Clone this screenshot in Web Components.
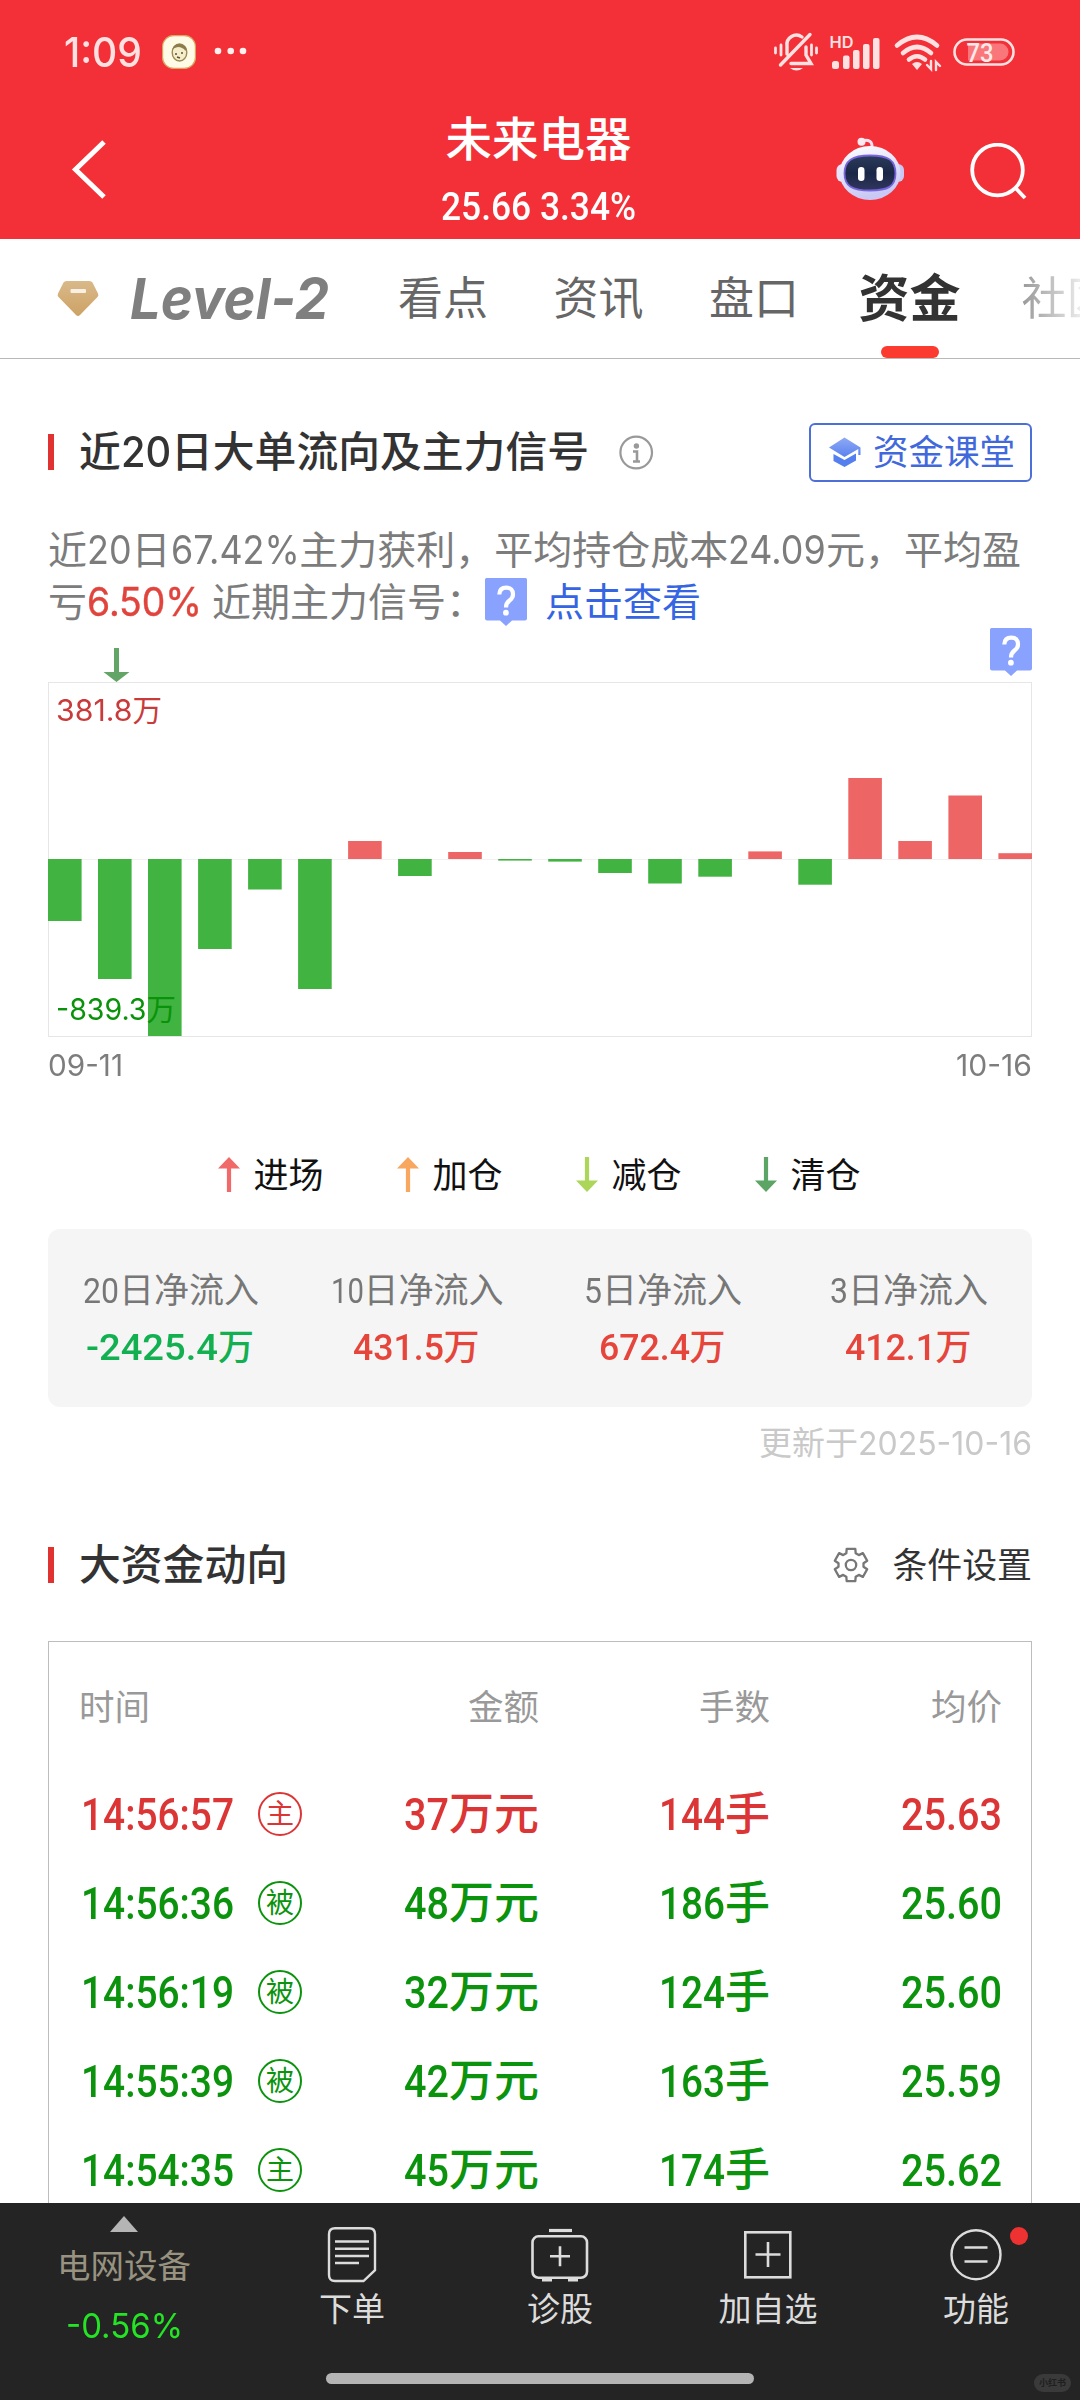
<!DOCTYPE html>
<html lang="zh-CN">
<head>
<meta charset="utf-8">
<title>未来电器</title>
<style>
html,body{margin:0;padding:0;background:#fff}
body{width:1080px;height:2400px;overflow:hidden;font-family:"Noto Sans CJK SC",sans-serif}
</style>
</head>
<body>
<stock-app></stock-app>
<script>
const def=(name,html,after)=>customElements.define(name,class extends HTMLElement{
  connectedCallback(){
    if(this.shadowRoot)return;
    this.attachShadow({mode:'open'}).innerHTML=typeof html==='function'?html(this):html;
    if(after)after(this);
  }
});

/* Single-line text whose latin runs are scaled so the line is exactly `w` px wide. */
def('fit-text',`<style>
:host{display:block;flex:none;line-height:1;height:1em;padding-bottom:.112em;white-space:pre}
i{font-style:inherit;display:inline-block;line-height:0;transform-origin:0 50%;font-family:var(--latin,Inter);-webkit-text-stroke:var(--stroke,0)}
</style><span></span>`,el=>{
  const box=el.shadowRoot.querySelector('span');
  const text=el.textContent;
  for(const part of text.split(/([\x20-\x7e]+)/)){
    if(!part)continue;
    if(/^[\x20-\x7e]/.test(part)){const i=document.createElement('i');i.textContent=part;box.append(i)}
    else box.append(part);
  }
  const w=parseFloat(el.getAttribute('w'));
  const runs=[...box.querySelectorAll('i')];
  if(!w||!runs.length)return;
  const widths=runs.map(r=>r.getBoundingClientRect().width);
  const latin=widths.reduce((a,b)=>a+b,0);
  const k=(w-(box.getBoundingClientRect().width-latin))/latin;
  runs.forEach((r,n)=>{r.style.width=widths[n]*k+'px';r.style.transform=`scaleX(${k})`});
});

def('status-bar',`<style>
:host{display:flex;height:104px;align-items:center;padding:0 65px 0 64px;color:#ffe1e2}
fit-text{font-size:41px;font-weight:500}
svg{flex:none;display:block;overflow:visible}
.app{margin-left:20px}.dots{margin-left:18px}.sp{flex:1}
.bell{margin-right:12px}.sig{margin-right:12px}.wifi{margin-right:13px}
</style>
<fit-text w="78">1:09</fit-text>
<svg class="app" width="34" height="34" viewBox="0 0 34 34"><rect x=".6" y=".6" width="32.8" height="32.8" rx="11" fill="#fffbe6" stroke="#d8a860" stroke-width="1.2"/><ellipse cx="17.500" cy="17.500" rx="7.300" ry="8.500" fill="#f6edcb" stroke="#9b8b58" stroke-width="1.400"/><path d="M10.500 14c2-6 10-7 14-1l-1 3c-2-3-5-4-7-4s-4 1-6 2z" fill="#8d7d4c"/><path d="M14 18v2M20 17v2M15 22l3 1" stroke="#5d5138" stroke-width="1.500"/></svg>
<svg class="dots" width="34" height="10" viewBox="0 0 34 10" fill="#fff0f0"><circle cx="4" cy="4" r="3.300"/><circle cx="16.700" cy="4" r="3.300"/><circle cx="29" cy="4" r="3.300"/></svg>
<div class="sp"></div>
<svg class="bell" width="44" height="40" viewBox="0 0 44 40" fill="none" stroke="#ffe1e2" stroke-width="3.400" stroke-linecap="round"><path d="M13 22V14a9.500 9.500 0 0 1 15-9M32 15v8l5 8.500H17M6.500 33L36 2.500"/><path d="M1.500 16v5M7 13v10M37.500 13v10M42.500 16v5" stroke-width="2.800"/><path d="M16 36h13q-6.500 5-13 0z" fill="#ffe1e2" stroke="none"/></svg>
<svg class="sig" width="52" height="36" viewBox="0 0 52 36" fill="#ffe1e2"><text x="-0.500" y="13.500" font-size="16" font-family="Inter" font-weight="600" textLength="24" lengthAdjust="spacingAndGlyphs">HD</text><rect x="2" y="27" width="7" height="8" rx="2.500"/><rect x="13" y="21.500" width="6.500" height="13.500" rx="2"/><rect x="23" y="16" width="6.500" height="19" rx="2"/><rect x="33" y="10" width="6.500" height="25" rx="2"/><rect x="43" y="4" width="6.500" height="31" rx="2"/></svg>
<svg class="wifi" width="46" height="38" viewBox="0 0 46 38" fill="none" stroke="#ffe1e2" stroke-width="4.600" stroke-linecap="round"><path d="M3 12.500q20-17 40 0M9 20q14-12 28 0M15 26.500q8-6.500 16 0"/><path d="M18 31q5-4 10 0l-5 6z" fill="#ffe1e2" stroke="none"/><path d="M37 28v8l-4-4M42 37v-8l4 4" stroke-width="2.400"/></svg>
<svg width="62" height="28" viewBox="0 0 62 28"><rect x="1.500" y="1.500" width="59" height="25" rx="12.500" fill="none" stroke="#ffe1e2" stroke-width="2.600"/><path d="M15 5.500H47a8.500 8.500 0 0 1 8.500 8.500 8.500 8.500 0 0 1-8.500 8.500H15z" fill="#f9777a"/><text x="13.500" y="23.500" font-size="25" font-family="Roboto" font-weight="500" fill="#ffe9e9" textLength="27" lengthAdjust="spacingAndGlyphs">73</text></svg>`);

def('app-header',`<style>
:host{display:block;height:239px;background:#f33038;color:#fff}
.nav{height:135px;display:flex;padding:0 50px 0 68px;align-items:flex-start}
svg{display:block;flex:none}
.back{margin-top:34px}
.mid{flex:1;display:flex;flex-direction:column;align-items:center;padding-left:133px;padding-top:9px}
.name{font-size:46.500px;font-weight:500}
.q{font-size:39px;font-weight:500;margin-top:19px;--latin:Roboto}
.bot{margin-top:32px}.s{margin:39px 0 0 54px}
</style>
<status-bar></status-bar>
<div class="nav">
<svg class="back" width="40" height="64" viewBox="0 0 40 64"><path d="M36 4L7.500 31.500L36 59" fill="none" stroke="#fff" stroke-width="5"/></svg>
<div class="mid"><fit-text class="name">未来电器</fit-text><fit-text class="q" w="195">25.66 3.34%</fit-text></div>
<svg class="bot" width="70" height="66" viewBox="0 0 70 66"><defs><linearGradient id="h" x1="0" y1="0" x2=".3" y2="1"><stop offset="0" stop-color="#fff"/><stop offset="1" stop-color="#c9c8f5"/></linearGradient><linearGradient id="f" x1="0" y1="0" x2="0" y2="1"><stop offset="0" stop-color="#2c3b5c"/><stop offset=".5" stop-color="#1b2746"/><stop offset="1" stop-color="#30365e"/></linearGradient></defs><path d="M25 5q12-3 11 7" fill="none" stroke="#f5dff0" stroke-width="3"/><circle cx="25.500" cy="5.800" r="4" fill="#fbe9f2"/><rect x="0.500" y="28" width="12" height="18" rx="6" fill="#e5e4fc"/><rect x="56" y="28" width="12" height="18" rx="6" fill="#c9c8f4"/><ellipse cx="34" cy="37" rx="30.500" ry="27" fill="url(#h)"/><path d="M34 19.500c19 0 25.500 5 25.500 18S52 54.500 34 54.500 8.500 50 8.500 37.500 16 19.500 34 19.500z" fill="url(#f)" stroke="#7865dc" stroke-width="1.800"/><rect x="22" y="31" width="6.500" height="14" rx="3.200" fill="#fff"/><rect x="40.500" y="31" width="6.500" height="14" rx="3.200" fill="#fff"/></svg>
<svg class="s" width="70" height="60" viewBox="0 0 70 60" fill="none" stroke="#fff" stroke-width="3.800"><circle cx="37.500" cy="27" r="25.300"/><path d="M56 45.500l9 9.500"/></svg>
</div>`);

def('tab-bar',`<style>
:host{display:flex;border-bottom:1px solid #b8b8b8;box-sizing:border-box;height:120px;align-items:center;color:#666;font-size:45px;padding-left:57px;overflow:hidden}
svg{flex:none;display:block}
.l{font-size:57px;color:#7f7f7f;font-weight:700;font-style:italic;margin:-2px 69px 0 31px}
.t{width:155.500px;flex:none}
.on{flex:none;margin-left:-12px;color:#333;font-size:51px;font-weight:700;height:119px;display:flex;flex-direction:column;align-items:center;width:114px}
.on fit-text{margin-top:31px}
.on b{display:block;width:58px;height:12px;border-radius:6px;background:#fb3a30;margin-top:19px}
.last{margin-left:55px;color:#999;-webkit-mask-image:linear-gradient(90deg,#000 0,rgba(0,0,0,.4) 45px,rgba(0,0,0,.2) 58px);mask-image:linear-gradient(90deg,#000 0,rgba(0,0,0,.4) 45px,rgba(0,0,0,.2) 58px)}
</style>
<svg width="42" height="36" viewBox="0 0 42 36"><defs><linearGradient id="g" x2="0" y2="1"><stop stop-color="#d9b98a"/><stop offset="1" stop-color="#cda264"/></linearGradient></defs><path d="M9.500 0h23q2 0 3 1.500l5.500 11q1 2-.5 3.500L23 34q-2 2-4 0L1.500 16q-1.500-1.500-.5-3.500L6.500 1.500Q7.500 0 9.500 0z" fill="url(#g)"/><rect x="13.500" y="8" width="15.500" height="4" rx="1" fill="#f8f0e4"/></svg>
<fit-text class="l" w="199">Level-2</fit-text>
<fit-text class="t">看点</fit-text><fit-text class="t">资讯</fit-text><fit-text class="t">盘口</fit-text>
<div class="on"><fit-text>资金</fit-text><b></b></div>
<fit-text class="last">社区</fit-text>`);

def('section-title',el=>`<style>
:host{display:flex;align-items:center;height:58px;color:#333}
i{width:6px;height:36px;background:#e13232;margin-right:25px}
fit-text{font-size:41.800px;font-weight:500}
.sp{flex:1}
</style><i></i><fit-text w="${el.getAttribute('w')||''}">${el.getAttribute('label')}</fit-text><slot name="after"></slot><span class="sp"></span><slot></slot>`);

def('info-icon',`<style>:host{display:block;margin-left:30px}svg{display:block}</style>
<svg width="36" height="36" viewBox="0 0 36 36"><circle cx="17.200" cy="18.500" r="15.800" fill="none" stroke="#999" stroke-width="2.200"/><circle cx="17.400" cy="12" r="2.700" fill="#999"/><path d="M14 17.500h4V27M14 27.500h7" fill="none" stroke="#999" stroke-width="2.600"/></svg>`);

def('lesson-button',`<style>
:host{display:flex;box-sizing:border-box;width:223px;height:59px;border:2px solid #4d70d8;border-radius:6px;align-items:center;padding-left:17px;color:#4269dc;font-size:35.500px}
svg{display:block;margin-right:11px}
</style>
<svg width="34" height="32" viewBox="0 0 34 32"><defs><linearGradient id="c" x2="0" y2="1"><stop stop-color="#8fa9f5"/><stop offset="1" stop-color="#5a82ee"/></linearGradient></defs><path d="M1 11.500L16.500 1.500L32.500 11.500V19h-2.200V13L16.500 21z" fill="url(#c)"/><path d="M5.500 18l11 6 11.500-6.500v7L16.500 31 5.500 25z" fill="#557fee"/></svg>
<fit-text>资金课堂</fit-text>`);

def('q-badge',`<style>:host{display:block;flex:none}svg{display:block}</style>
<svg width="42" height="48" viewBox="0 0 42 48"><path d="M1.500 0h39Q42 0 42 1.500v39Q42 42.500 40 42.500H27L21 48l-6-5.500H2Q0 42.500 0 40.500v-39Q0 0 1.500 0z" fill="#89a2fd"/><path d="M14.300 16.500Q14.500 9.700 21.300 9.700T28 16.500Q28 19.800 24.500 22.500T21 29.500" fill="none" stroke="#fff" stroke-width="4.200"/><circle cx="20.900" cy="34.700" r="2.900" fill="#fff"/></svg>`);

def('flow-brief',`<style>
:host{display:block;margin-top:43px;font-size:39px;color:#7c7c7c}
.row{display:flex;height:52px;align-items:center}
.r{color:#e0443c;--stroke:.4px}.b{color:#3565e2;margin-left:18px}
</style>
<div class="row"><fit-text w="973">近20日67.42%主力获利，平均持仓成本24.09元，平均盈</fit-text></div>
<div class="row"><fit-text>亏</fit-text><fit-text class="r" w="115">6.50%</fit-text><fit-text w="283"> 近期主力信号：</fit-text><q-badge></q-badge><fit-text class="b">点击查看</fit-text></div>`);

const bars=[-62,-120,-177,-90,-30.5,-130,18,-17,7,-1.6,-2.6,-14,-24.5,-17.7,7.6,-25.7,81,18,63.5,5.8];
def('flow-chart',()=>`<style>
:host{display:block;color:#7d7d7d}
.marks{height:54px;display:flex;justify-content:space-between;padding-left:55px}
.marks svg{margin-top:20px}
.plot{height:355px;position:relative}
.plot>svg{display:block}
.lab{position:absolute;left:8px;font-size:29.500px;z-index:1}
.hi{top:12px;color:#c93a3a}.lo{bottom:11px;color:#0a930a}
.dates{height:56px;display:flex;align-items:center;justify-content:space-between;font-size:30px}
</style>
<div class="marks"><svg width="27" height="34" viewBox="0 0 27 34" fill="#62a566"><path d="M11 0h5v24h10.500L13.500 34 .5 24H11z"/></svg><q-badge></q-badge></div>
<div class="plot"><svg width="984" height="355"><rect x=".5" y=".5" width="983" height="354" fill="none" stroke="#e6e6e6"/><path d="M0 177.500h984" stroke="#f1f1f1"/>${bars.map((v,i)=>`<rect x="${(i*50.02).toFixed(1)}" y="${v>0?177-v:177}" width="33.600" height="${Math.abs(v)}" fill="${v>0?'#ee6565':'#41b341'}"/>`).join('')}</svg>
<fit-text class="lab hi" w="106">381.8万</fit-text><fit-text class="lab lo" w="120">-839.3万</fit-text></div>
<div class="dates"><fit-text w="75">09-11</fit-text><fit-text w="76">10-16</fit-text></div>`);

def('signal-legend',()=>{
  const item=(t,c,up)=>`<div><svg width="22" height="35" viewBox="0 0 22 35" fill="${c}"><path ${up?'':'transform="rotate(180 11 17.5)"'} d="M11 0l11 11.500h-8.900V35H8.900V11.500H0z"/></svg><fit-text>${t}</fit-text></div>`;
  return `<style>
:host{display:flex;height:40px;margin-top:61px;padding-left:170px;font-size:35px;color:#111}
div{display:flex;align-items:center;width:179px}
svg{display:block;margin-right:13.500px}
</style>${item('进场','#f16a6a',1)}${item('加仓','#f9a65e',1)}${item('减仓','#acd65a')}${item('清仓','#5ba565')}`;
});

def('net-summary',()=>{
  const c=(l,lw,v,vw,g)=>`<div><fit-text class="l" w="${lw}">${l}</fit-text><fit-text class="v ${g||''}" w="${vw}">${v}</fit-text></div>`;
  return `<style>
:host{display:grid;grid-template-columns:repeat(4,1fr);height:178px;margin-top:35px;background:#f5f5f5;border-radius:12px;--latin:Roboto}
div{display:flex;flex-direction:column;align-items:center;padding-top:41px}
.l{font-size:35px;color:#777}.v{font-size:36px;margin-top:17px;margin-right:2px;color:#e6453c;font-weight:500}
.g{color:#12b050}
</style>${c('20日净流入',176,'-2425.4万',168,'g')}${c('10日净流入',173,'431.5万',127)}${c('5日净流入',158,'672.4万',127)}${c('3日净流入',158,'412.1万',127)}`;
});

def('update-note',`<style>:host{display:flex;justify-content:flex-end;align-items:center;height:40px;margin-top:16px;font-size:33px;color:#c9c9c9}</style><fit-text w="273">更新于2025-10-16</fit-text>`);

def('filter-link',()=>{
  let d='';
  for(let n=0;n<6;n++){
    const a=n*60-90,p=(r,t)=>{const q=(a+t)*Math.PI/180;return (18+r*Math.cos(q)).toFixed(1)+' '+(18+r*Math.sin(q)).toFixed(1)};
    d+=(n?'L':'M')+p(12.6,-22)+'L'+p(16.8,-15)+'L'+p(16.8,15)+'L'+p(12.6,22);
  }
  return `<style>:host{display:flex;align-items:center;font-size:34.900px;color:#333}svg{display:block;margin-right:23px}</style>
<svg width="36" height="36" viewBox="0 0 36 36" fill="none" stroke="#777" stroke-width="2.300" stroke-linejoin="round"><path d="${d}z"/><circle cx="18" cy="18" r="5.200"/></svg><fit-text>条件设置</fit-text>`;
});

def('trade-row',el=>{
  const [t,k,a,h,p,c]=el.getAttribute('data').split('|');
  return `<style>
:host{display:flex;height:89px;align-items:center;padding:0 29px 0 32px;color:${c==='r'?'#dc3535':'#0b930d'};font-size:45px;font-weight:500;--latin:Roboto}
b{box-sizing:border-box;width:44px;height:44px;border:2px solid currentColor;border-radius:50%;display:flex;align-items:center;justify-content:center;font-size:28px;font-weight:400;margin-left:24px}
div{display:flex;justify-content:flex-end}
.a{flex:1}.h{width:231px}.p{width:232px}
</style><fit-text w="153">${t}</fit-text><b><fit-text>${k}</fit-text></b><div class="a"><fit-text w="135">${a}</fit-text></div><div class="h"><fit-text w="111">${h}</fit-text></div><div class="p"><fit-text w="101">${p}</fit-text></div>`;
});

def('trade-table',`<style>
:host{display:block;box-sizing:border-box;height:620px;margin-top:47px;border:1px solid #bdbdbd}
.head{height:127px;box-sizing:border-box;padding:3px 29px 0 30px;display:flex;align-items:center;color:#999;font-size:35.500px}
.head fit-text+fit-text{text-align:right}
.h{width:231px}.a{flex:1}.p{width:232px}
</style><div class="head"><fit-text>时间</fit-text><fit-text class="a">金额</fit-text><fit-text class="h">手数</fit-text><fit-text class="p">均价</fit-text></div>
<trade-row data="14:56:57|主|37万元|144手|25.63|r"></trade-row>
<trade-row data="14:56:36|被|48万元|186手|25.60|g"></trade-row>
<trade-row data="14:56:19|被|32万元|124手|25.60|g"></trade-row>
<trade-row data="14:55:39|被|42万元|163手|25.59|g"></trade-row>
<trade-row data="14:54:35|主|45万元|174手|25.62|g"></trade-row>`);

def('bottom-bar',`<style>
:host{display:block;flex:none;height:197px;background:#242424;color:#dcdcdc;font-size:33px}
.row{display:flex;height:170px}
.ix{width:248px;display:flex;flex-direction:column;align-items:center;padding-top:13px;box-sizing:border-box}
.ix svg{display:block}
.n{color:#989280;margin-top:15px;font-size:33.500px}.v{color:#25e425;margin-top:22px;font-size:34.500px}
.it{flex:1;display:flex;flex-direction:column;align-items:center;position:relative}
.it svg{display:block;margin-top:21px;fill:none;stroke:#dcdcdc}
.it fit-text{margin-top:5px}
.dot{position:absolute;left:138px;top:24px;width:18px;height:18px;border-radius:50%;background:#ee3131}
.home{width:428px;height:11px;border-radius:6px;background:#b4b4b4;margin-left:326px}
.wm{position:absolute;left:1034px;top:2374px;width:37px;height:18px;border-radius:9px;background:#3a3a3a;color:#1f1f1f;font-size:9px;font-weight:700;display:flex;align-items:center;justify-content:center}
</style>
<div class="row">
<div class="ix"><svg width="28" height="16" viewBox="0 0 28 16"><path d="M14 0l14 16H0z" fill="#b5b5b5"/></svg><fit-text class="n">电网设备</fit-text><fit-text class="v" w="117">-0.56%</fit-text></div>
<div class="it"><svg width="50" height="62" viewBox="0 0 50 62" stroke-width="2.400"><path d="M8 4.200h34q6 0 6 6v36L36.500 57H8q-6 0-6-6V10.200q0-6 6-6z"/><path d="M8 17.500h34M8 24.800h34M8 32h34M8 39h24"/></svg><fit-text>下单</fit-text></div>
<div class="it"><svg width="60" height="62" viewBox="0 0 60 62" stroke-width="2.600"><path d="M19 6.500h23" stroke-width="3.200"/><rect x="2.500" y="12.300" width="54.500" height="41.500" rx="6"/><path d="M12 55.500h10M38 55.500h10" stroke-width="4"/><path d="M20 32.300h20M30 22.300v20"/></svg><fit-text>诊股</fit-text></div>
<div class="it"><svg width="50" height="62" viewBox="0 0 50 62" stroke-width="2.600"><rect x="2.300" y="8.300" width="45" height="45"/><path d="M12.500 30.500h25M25 18v25"/></svg><fit-text>加自选</fit-text></div>
<div class="it"><svg width="54" height="62" viewBox="0 0 54 62" stroke-width="2.400"><circle cx="27" cy="30.700" r="24.500"/><path d="M15.500 23.500h23M15.500 37.500h23"/></svg><fit-text>功能</fit-text><span class="dot"></span></div>
</div>
<div class="home"></div>
<span class="wm"><fit-text>小红书</fit-text></span>`);

def('stock-app',`<style>
:host{display:flex;flex-direction:column;width:1080px;height:2400px;position:relative;overflow:hidden;background:#fff}
main{flex:1;min-height:0;overflow:hidden;padding:64px 48px 0}
.s2{margin-top:73px}
</style>
<app-header></app-header><tab-bar></tab-bar>
<main>
<section-title label="近20日大单流向及主力信号" w="510"><info-icon slot="after"></info-icon><lesson-button></lesson-button></section-title>
<flow-brief></flow-brief>
<flow-chart></flow-chart>
<signal-legend></signal-legend>
<net-summary></net-summary>
<update-note></update-note>
<section-title class="s2" label="大资金动向"><filter-link></filter-link></section-title>
<trade-table></trade-table>
</main>
<bottom-bar></bottom-bar>`);
</script>
</body>
</html>
